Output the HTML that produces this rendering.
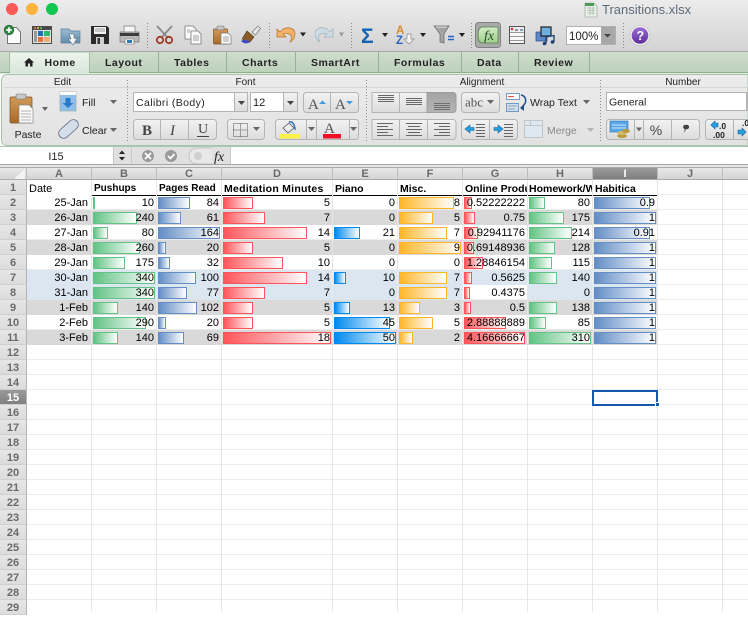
<!DOCTYPE html>
<html><head><meta charset="utf-8"><title>Transitions.xlsx</title>
<style>
html,body{margin:0;padding:0;background:#fff}
body{width:748px;height:612px;overflow:hidden;position:relative;font-family:"Liberation Sans",sans-serif}
#chrome{position:absolute;left:0;top:0}
#chrome text{font-family:"Liberation Sans",sans-serif;fill:#222}
.col{position:absolute;top:167px;height:13px;box-sizing:border-box;background:linear-gradient(#e8e8e8,#d4d4d4);border-right:1px solid #bdbdbd;border-top:1px solid #aaa;border-bottom:1px solid #aaa;font:bold 11px/12px "Liberation Sans",sans-serif;color:#6a6a6a;text-align:center}
.rh{position:absolute;left:0;width:27px;height:15px;box-sizing:border-box;background:linear-gradient(#e6e6e6,#dcdcdc);border-right:1px solid #b4b4b4;border-bottom:1px solid #cfcfcf;font:bold 11px/17px "Liberation Sans",sans-serif;color:#6a6a6a;text-align:center}
.v{position:absolute;top:180px;bottom:0;width:1px;background:#e6e6e6}
#hl{position:absolute;left:27px;right:0;top:180px;bottom:0;background:repeating-linear-gradient(to bottom,#fff 0,#fff 14px,#ececec 14px,#ececec 15px)}
table{position:absolute;left:27px;top:180px;border-collapse:separate;border-spacing:0;table-layout:fixed;width:631px;font:11px "Liberation Sans",sans-serif;color:#000}
td{height:15px;box-sizing:border-box;padding:0 2px 0 0;text-align:right;position:relative;overflow:hidden;white-space:nowrap;border-right:1px solid #e6e6e6;border-bottom:1px solid #ececec;line-height:14px}
td span{position:relative;top:1px}
td:first-child{padding-right:3px}
tr.h td{text-align:left;font-weight:bold;font-size:10.500px;padding:0 0 0 2px;border-bottom:0;background:#fff}
tr.h td:first-child{font-weight:normal;font-size:11px}
tr.t td:not(:first-child){box-shadow:inset 0 1px #000}
tr.g td,td.g{background:#d9d9d9;border-right-color:#e6e6e6;border-bottom-color:#d9d9d9}
tr.b td,td.b{background:#dce6f1;border-right-color:#e8eef5;border-bottom-color:#dce6f1}
tr td.w{background:#fff;border-right-color:#e6e6e6;border-bottom-color:#ececec}
td i{position:absolute;left:1px;top:2px;height:12px;box-sizing:border-box;border:1px solid}
.B i{border-color:#63c384;background:linear-gradient(90deg,#63c384,#fff)}
.C i,.I i{border-color:#638ec6;background:linear-gradient(90deg,#638ec6,#fff)}
.D i,.G i{border-color:#ff555a;background:linear-gradient(90deg,#ff555a,#fff)}
.E i{border-color:#008aef;background:linear-gradient(90deg,#008aef,#fff)}
.F i{border-color:#ffb628;background:linear-gradient(90deg,#ffb628,#fff)}
.H i{border-color:#63c384;background:linear-gradient(90deg,#63c384,#fff)}
#sel{position:absolute;left:592px;top:390px;width:66px;height:16px;box-sizing:border-box;border:2px solid #1558b0}
#hd{position:absolute;left:655px;top:402px;background:#1558b0;border:1px solid #fff;width:3px;height:3px}
</style></head><body>
<svg id="chrome" width="748" height="167" viewBox="0 0 748 167" xmlns="http://www.w3.org/2000/svg">
<defs>
<linearGradient id="tb" x1="0" y1="0" x2="0" y2="1"><stop offset="0" stop-color="#ececec"/><stop offset="1" stop-color="#d3d3d3"/></linearGradient>
<linearGradient id="tab" x1="0" y1="0" x2="0" y2="1"><stop offset="0" stop-color="#cfdfcd"/><stop offset="1" stop-color="#bcd0bb"/></linearGradient>
<linearGradient id="hm" x1="0" y1="0" x2="0" y2="1"><stop offset="0" stop-color="#eef5ee"/><stop offset="1" stop-color="#d8e6d9"/></linearGradient>
<linearGradient id="rb" x1="0" y1="0" x2="0" y2="1"><stop offset="0" stop-color="#ececec"/><stop offset="1" stop-color="#e2e2e2"/></linearGradient>
<linearGradient id="bt" x1="0" y1="0" x2="0" y2="1"><stop offset="0" stop-color="#f2f2f2"/><stop offset="1" stop-color="#dcdcdc"/></linearGradient>
<linearGradient id="dk" x1="0" y1="0" x2="0" y2="1"><stop offset="0" stop-color="#a4a4a4"/><stop offset="1" stop-color="#b4b4b4"/></linearGradient>
<linearGradient id="clip" x1="0" y1="0" x2="0" y2="1"><stop offset="0" stop-color="#d29a5a"/><stop offset="1" stop-color="#a86a28"/></linearGradient>
<linearGradient id="fxg" x1="0" y1="0" x2="0" y2="1"><stop offset="0" stop-color="#d3ecc6"/><stop offset="1" stop-color="#9fd08c"/></linearGradient>
<linearGradient id="pur" x1="0" y1="0" x2="0" y2="1"><stop offset="0" stop-color="#9a6fd0"/><stop offset="1" stop-color="#5e2ea0"/></linearGradient>
<linearGradient id="fold" x1="0" y1="0" x2="0" y2="1"><stop offset="0" stop-color="#9dbdd4"/><stop offset="1" stop-color="#5f8cae"/></linearGradient>
</defs>
<rect width="748" height="52" fill="url(#tb)"/>
<circle cx="12" cy="9" r="6" fill="#fc5b57"/><circle cx="32" cy="9" r="6" fill="#fdb43f"/><circle cx="52" cy="9" r="6" fill="#13c551"/>
<path d="M585 3h9l3 3v11h-12z" fill="#e8efe6" stroke="#8a9a8a" stroke-width=".6"/><path d="M585 3h9v3h-9z" fill="#4f9a5c"/><path d="M587 8h8M587 10.500h8M587 13h8M590 7v8M593 7v8" stroke="#9aa89a" stroke-width=".6" fill="none"/>
<text x="602" y="14" font-size="13" style="fill:#5d6b78">Transitions.xlsx</text>
<path d="M7.500 27.500h9l4 4.500v11.500h-13z" fill="#fbfbfb" stroke="#777"/><circle cx="9" cy="30" r="4.800" fill="#2b8a3e" stroke="#1d5c2a" stroke-width=".6"/><path d="M9 27.200v5.600M6.200 30h5.600" stroke="#fff" stroke-width="1.800"/>
<rect x="32" y="26" width="20" height="18" fill="#4a4a4a"/><rect x="33" y="30" width="18" height="13" fill="#e4e4e4"/><circle cx="35" cy="28" r="1" fill="#e85"/><circle cx="38" cy="28" r="1" fill="#ec5"/><circle cx="41" cy="28" r="1" fill="#6c6"/>
<rect x="38" y="31" width="5" height="5" fill="#1f6fb8"/><rect x="44" y="31" width="6" height="5" fill="#35b56d"/><rect x="38" y="37" width="5" height="5" fill="#e8703a"/><rect x="44" y="37" width="6" height="5" fill="#e8b27a"/><rect x="34" y="31" width="3" height="11" fill="#9a9a9a"/>
<path d="M61 29h8l2 2h9v12h-19z" fill="url(#fold)" stroke="#5c7f9c" stroke-width=".7"/><path d="M69 34h5v4c1 1 3 0 4 -1l-5 8l-5 -6h3z" fill="#f4f4f4" stroke="#5c6f80" stroke-width=".6"/>
<path d="M91 26h16l2 2v16h-18z" fill="#2a2a2a"/><path d="M94 27h12v7h-12z" fill="#f2f2f2"/><path d="M95 29h10M95 31h10" stroke="#999"/><path d="M96 37h8v7h-8z" fill="#cfcfcf"/><rect x="97.500" y="38" width="2.500" height="6" fill="#333"/>
<path d="M124 26h11v7h-11z" fill="#f6f6f6" stroke="#777" stroke-width=".7"/><path d="M120 32h19v10h-19z" fill="#b9b9b9" stroke="#777" stroke-width=".7"/><path d="M120 33h19v3h-19z" fill="#3c3c3c"/><path d="M125 39h9v5h-9z" fill="#fff" stroke="#666" stroke-width=".6"/><rect x="127" y="40" width="5" height="3" fill="#2a7fb0"/>
<g stroke="#8a8a8a" stroke-dasharray="1 2" fill="none"><path d="M147.500 23v25M269.500 23v25M351.500 23v25M471.500 23v25M623.500 23v25"/></g>
<path d="M157 26l11 12M172 26l-11 12" stroke="#8a8a8a" stroke-width="1.800" fill="none"/><circle cx="160" cy="40" r="3.200" fill="none" stroke="#a03a24" stroke-width="1.800"/><circle cx="169" cy="40" r="3.200" fill="none" stroke="#a03a24" stroke-width="1.800"/>
<path d="M185 26h8l3 3v10h-11z" fill="#fafafa" stroke="#777" stroke-width=".8"/><path d="M191 31h7l3 3v10h-10z" fill="#fafafa" stroke="#777" stroke-width=".8"/><path d="M193 36h6M193 38h6M193 40h6M187 30h3M187 32h3" stroke="#888" stroke-width=".8"/>
<rect x="213.500" y="29" width="14" height="15" rx="1" fill="url(#clip)" stroke="#7a5020" stroke-width=".7"/><rect x="217" y="26" width="7" height="4" rx="1" fill="#c4c4c4" stroke="#777" stroke-width=".6"/><path d="M221 33h7l3 3v8h-10z" fill="#fafafa" stroke="#777" stroke-width=".7"/><path d="M223 37h6M223 39h6M223 41h6" stroke="#888" stroke-width=".8"/>
<path d="M252 32l6 -6l2.500 2.500l-5 6.500z" fill="#e6e6e6" stroke="#777" stroke-width=".7"/><path d="M247 31l7 6l-4 5l-8 -3z" fill="#8a5a2a" stroke="#5c3a18" stroke-width=".6"/><path d="M241 41c3 -2 6 -2 9 1c-3 2 -6 2 -9 -1z" fill="#3a4fc0"/>
<path d="M283 29c7 -3 12 0 12 5c0 3 -2 7 -5 8c2 -3 2 -7 -1 -8c-2 -1 -4 -1 -6 0l3 3h-9v-8l3 3z" fill="#f3b169" stroke="#b07428" stroke-width=".7"/><path d="M300 32.500h6l-3 4z" fill="#222"/>
<path d="M327 29c-7 -3 -12 0 -12 5c0 3 2 7 5 8c-2 -3 -2 -7 1 -8c2 -1 4 -1 6 0l-3 3h9v-8l-3 3z" fill="#cddbe4" stroke="#9db2c0" stroke-width=".7"/><path d="M339 32.500h5l-2.500 4z" fill="#999"/>
<text x="361" y="43" font-size="21" font-weight="bold" style="fill:#1464b4">Σ</text><path d="M382 33h6l-3 4z" fill="#222"/>
<text x="396" y="34" font-size="11.500" font-weight="bold" style="fill:#d88a30">A</text><text x="396" y="44" font-size="11.500" font-weight="bold" style="fill:#2c62c0">Z</text><path d="M407 34h4v5h3l-5 5l-5 -5h3z" fill="#f3f3f3" stroke="#888" stroke-width=".7"/><path d="M420 33h6l-3 4z" fill="#222"/>
<path d="M434 26h15l-5 8v9l-4 -1v-8z" fill="#a4a4a4" stroke="#666" stroke-width=".7"/><path d="M436 27h11" stroke="#e8e8e8"/><path d="M448 36.500h6M448 39.500h6" stroke="#2a62c0" stroke-width="1.600"/><path d="M459 33h6l-3 4z" fill="#222"/>
<rect x="475.500" y="22.500" width="25" height="25" rx="3" fill="#a9a9a9" stroke="#808080"/><path d="M483 27h15v16h-15c-4 0 -5 -3 -5 -8s1 -8 5 -8z" fill="url(#fxg)" stroke="#4f8048" stroke-width=".8"/><text x="484" y="40" font-size="14" font-style="italic" style="font-family:'Liberation Serif',serif;fill:#2e4a2a">fx</text>
<rect x="509.500" y="26.500" width="15" height="17" fill="#f8f8f8" stroke="#555"/><path d="M510 32.500h14M510 36.500h14M510 40.500h14" stroke="#999"/><rect x="510" y="27" width="14" height="5" fill="#eee"/><circle cx="512" cy="29" r="1.300" fill="#d33"/><rect x="515" y="29" width="3" height="2" fill="#89a"/><rect x="520" y="29" width="3" height="2" fill="#89a"/>
<rect x="536" y="32" width="11" height="9" fill="#5b88c8" stroke="#2a4a80" stroke-width=".7"/><rect x="541" y="27" width="10" height="9" fill="#6eb0e0" stroke="#222" stroke-width="1.200"/><path d="M546 44v-7l8 -1.500v6.500" fill="none" stroke="#1f3f70" stroke-width="1.300"/><circle cx="544.500" cy="43.500" r="1.800" fill="#1f3f70"/><circle cx="552.500" cy="42" r="1.800" fill="#1f3f70"/>
<rect x="566.500" y="26.500" width="49" height="18" fill="#fff" stroke="#b0b0b0"/><rect x="601" y="27" width="14" height="17" fill="#a8a8a8"/><path d="M604 34h7l-3.500 3.500z" fill="#444"/><text x="569" y="40" font-size="11.500">100%</text>
<circle cx="640" cy="35.500" r="10" fill="#f2f2f2" stroke="#bbb" stroke-width=".6"/><circle cx="640" cy="35.500" r="8.300" fill="url(#pur)"/><text x="636.500" y="40" font-size="12.500" font-weight="bold" style="fill:#fff">?</text>
<rect y="51" width="748" height="22" fill="url(#tab)"/><path d="M0 51.500h748" stroke="#a6a6a6"/><path d="M0 72.500h748" stroke="#8fae90"/>
<g stroke="#97b098"><path d="M89.500 52v20M158.500 52v20M226.500 52v20M295.500 52v20M378.500 52v20M461.500 52v20M518.500 52v20M589.500 52v20"/></g>
<rect x="10" y="52" width="79" height="21" fill="url(#hm)"/><path d="M9.500 72v-20h80v20" fill="none" stroke="#a6bda7"/>
<path d="M24 62.500l5 -4.500l5 4.500h-1.500v4h-2.500v-3h-2v3h-2.500v-4z" fill="#222"/>
<g font-size="10.500" font-weight="bold" style="letter-spacing:.5px">
<text x="44.500" y="66">Home</text><text x="105" y="66">Layout</text><text x="174" y="66">Tables</text><text x="242" y="66">Charts</text><text x="311" y="66">SmartArt</text><text x="394" y="66">Formulas</text><text x="477" y="66">Data</text><text x="534" y="66">Review</text></g>
<path d="M0 73h748v1H0z" fill="#dfeee0"/>
<path d="M1.500 81c0 -4 2 -6.500 6 -6.500H748V145.500H7.500c-4 0 -6 -2 -6 -5z" fill="url(#rb)" stroke="#a9c4ac"/>
<path d="M4 87.500H748" stroke="#d6d6d6"/>
<g font-size="10" text-anchor="middle"><text x="62.500" y="85">Edit</text><text x="245.500" y="85">Font</text><text x="482" y="85">Alignment</text><text x="683" y="85">Number</text></g>
<g stroke="#8e8e8e" stroke-dasharray="1 2"><path d="M127.500 80v62M366.500 80v62M600.500 80v62"/></g>
<rect x="10" y="97" width="22" height="26" rx="1.500" fill="url(#clip)" stroke="#7a5020" stroke-width=".7"/><rect x="16" y="94" width="10" height="5" rx="1.500" fill="#c9c9c9" stroke="#777" stroke-width=".6"/><path d="M19 105h10l4 4v14h-14z" fill="#fafafa" stroke="#888" stroke-width=".7"/><path d="M21 111h10M21 114h10M21 117h10M21 120h10" stroke="#999" stroke-width=".8"/>
<path d="M42 107h6l-3 4z" fill="#666"/><text x="28" y="138" font-size="10.500" text-anchor="middle">Paste</text>
<rect x="60" y="92" width="16" height="19" fill="#8fc0ea" stroke="#9aa" stroke-width=".7"/><rect x="60" y="92" width="16" height="3" fill="#fff"/><path d="M65.500 98h5v5h3l-5.500 5l-5.500 -5h3z" fill="#2a78c8"/>
<text x="82" y="106" font-size="10.500">Fill</text><path d="M110 100h7l-3.500 4z" fill="#666"/>
<rect x="57" y="124" width="23" height="10" rx="5" fill="#d2deea" stroke="#666a80" stroke-width=".8" transform="rotate(-42 68.500 129)"/>
<text x="82" y="134" font-size="10.500">Clear</text><path d="M110 128h7l-3.500 4z" fill="#666"/>
<rect x="133.500" y="92.500" width="114" height="19" fill="#fff" stroke="#b4b4b4"/><rect x="234" y="93" width="13" height="18" fill="url(#bt)"/><path d="M234.500 93v18" stroke="#b4b4b4"/><path d="M238 101h7l-3.500 4z" fill="#444"/><text x="136" y="106" font-size="10.500" style="letter-spacing:.4px">Calibri (Body)</text>
<rect x="250.500" y="92.500" width="47" height="19" fill="#fff" stroke="#b4b4b4"/><rect x="283" y="93" width="14" height="18" fill="url(#bt)"/><path d="M283.500 93v18" stroke="#b4b4b4"/><path d="M287 101h7l-3.500 4z" fill="#444"/><text x="253" y="106" font-size="11">12</text>
<rect x="303.500" y="92.500" width="55" height="20" rx="3" fill="url(#bt)" stroke="#b4b4b4"/><path d="M330.500 93v19" stroke="#b4b4b4"/>
<text x="308" y="109" font-size="15" style="font-family:'Liberation Serif',serif;fill:#555">A</text><text x="335" y="109" font-size="15" style="font-family:'Liberation Serif',serif;fill:#555">A</text><path d="M319 104h7l-3.500 -3.500z" fill="#3f9ae0"/><path d="M346 101h7l-3.500 3.500z" fill="#3f9ae0"/>
<rect x="133.500" y="119.500" width="83" height="20" rx="3" fill="url(#bt)" stroke="#b4b4b4"/><path d="M160.500 120v19M188.500 120v19" stroke="#b4b4b4"/>
<text x="142" y="135" font-size="15" font-weight="bold" style="font-family:'Liberation Serif',serif;fill:#444">B</text><text x="170" y="135" font-size="15" font-style="italic" style="font-family:'Liberation Serif',serif;fill:#444">I</text><text x="198" y="133" font-size="14" style="font-family:'Liberation Serif',serif;fill:#444">U</text><path d="M197 136.500h12" stroke="#444"/>
<rect x="227.500" y="119.500" width="37" height="20" rx="3" fill="url(#bt)" stroke="#b4b4b4"/><path d="M233.500 123.500h14v13h-14zM240.500 123.500v13M233.500 130h14" fill="none" stroke="#555" stroke-dasharray="1 1"/><path d="M253 127h7l-3.500 4z" fill="#666"/>
<rect x="275.500" y="119.500" width="83" height="20" rx="3" fill="url(#bt)" stroke="#b4b4b4"/><path d="M306.500 120v19M316.500 120v19M349.500 120v19" stroke="#b4b4b4"/>
<path d="M283 128l6 -5l5 5l-6 5z" fill="#eee" stroke="#555" stroke-width=".8"/><path d="M289 122c3 -1 6 2 6 8" fill="none" stroke="#2a78c8" stroke-width="1.500"/><rect x="280" y="134" width="20" height="4.500" fill="#fbf24a"/>
<path d="M308 127h7l-3.500 4z" fill="#666"/>
<text x="324" y="133" font-size="15" style="font-family:'Liberation Serif',serif;fill:#555">A</text><rect x="323" y="134" width="18" height="4.500" fill="#f0102a"/><path d="M350 127h7l-3.500 4z" fill="#666"/>
<path d="M372 92.500h81a3 3 0 0 1 3 3v14a3 3 0 0 1 -3 3h-81z" fill="url(#bt)" stroke="#b4b4b4"/>
<path d="M427 92.500h26a3 3 0 0 1 3 3v14a3 3 0 0 1 -3 3h-26z" fill="url(#dk)" stroke="#999" stroke-width=".8"/><path d="M399.500 93v19" stroke="#b4b4b4"/>
<g stroke="#666" stroke-width="1" fill="none"><path d="M378 95.500h16M378 97.500h16M378 99.500h16M378 101.500h16"/><path d="M406 98.500h16M406 100.500h16M406 102.500h16M406 104.500h16"/></g><g stroke="#6f6f6f"><path d="M434 103.500h16M434 105.500h16M434 107.500h16M434 109.500h16"/></g>
<rect x="461.500" y="92.500" width="38" height="20" rx="3" fill="url(#bt)" stroke="#b4b4b4"/><text x="465" y="106.500" font-size="13" style="font-family:'Liberation Serif',serif;fill:#555">abc</text><path d="M487 100h7l-3.500 4z" fill="#666"/>
<rect x="506.500" y="93.500" width="13" height="6" fill="#fafafa" stroke="#5b88b8" stroke-width=".8"/><path d="M508 96.500h6" stroke="#e05050"/><rect x="506.500" y="103.500" width="12" height="8" fill="#cfe0f2" stroke="#5b88b8" stroke-width=".8"/><path d="M508 106h9M508 109h7" stroke="#7a8a9a" stroke-width=".8"/><path d="M521 95c5 1 7 7 1 12" fill="none" stroke="#1f4f90" stroke-width="1.500"/><path d="M524 104l-4 4l4 3z" fill="#1f4f90"/>
<text x="530" y="106" font-size="10.500">Wrap Text</text><path d="M583 100h7l-3.500 4z" fill="#666"/>
<path d="M372 119.500h81a3 3 0 0 1 3 3v14a3 3 0 0 1 -3 3h-81z" fill="url(#bt)" stroke="#b4b4b4"/><path d="M399.500 120v19M427.500 120v19" stroke="#b4b4b4"/>
<g stroke="#666" fill="none"><path d="M377 123.500h16M377 126.500h11M377 129.500h16M377 132.500h11M377 135.500h16"/><path d="M406 123.500h16M408 126.500h12M406 129.500h16M408 132.500h12M406 135.500h16"/><path d="M434 123.500h16M439 126.500h11M434 129.500h16M439 132.500h11M434 135.500h16"/></g>
<rect x="461.500" y="119.500" width="56" height="20" rx="3" fill="url(#bt)" stroke="#b4b4b4"/><path d="M489.500 120v19" stroke="#b4b4b4"/>
<path d="M465 129l5 -4v2.500h4v3h-4v2.500z" fill="#28a0e0" stroke="#1560a0" stroke-width=".6"/><path d="M476 124.500h9M476 127.500h9M476 130.500h9M476 133.500h9M476 136.500h9" stroke="#666"/>
<path d="M503 129l-5 -4v2.500h-4v3h4v2.500z" fill="#28a0e0" stroke="#1560a0" stroke-width=".6"/><path d="M504 124.500h9M504 127.500h9M504 130.500h9M504 133.500h9M504 136.500h9" stroke="#666"/>
<rect x="524.500" y="120.500" width="18" height="17" fill="#dde9f2" stroke="#c4c4c4"/><path d="M525 125.500h17M530.500 121v4" stroke="#c4c4c4"/><text x="547" y="134" font-size="10.500" style="fill:#8a8a8a">Merge</text><path d="M587 128h7l-3.500 4z" fill="#b4b4b4"/>
<rect x="606.500" y="92.500" width="140" height="18" fill="#fff" stroke="#b4b4b4"/><rect x="747.500" y="92.500" width="4" height="18" fill="#eee" stroke="#b4b4b4"/><text x="609" y="105.500" font-size="10.500">General</text>
<rect x="606.500" y="119.500" width="93" height="20" rx="3" fill="url(#bt)" stroke="#b4b4b4"/><path d="M634.500 120v19M643.500 120v19M671.500 120v19" stroke="#b4b4b4"/>
<rect x="610" y="121" width="18" height="11" fill="#5aa8e8" stroke="#2a70b0" stroke-width=".6"/><path d="M612 125h14M612 128h14" stroke="#cfe4f7"/><ellipse cx="622" cy="136" rx="5" ry="2" fill="#b89a40"/><ellipse cx="622" cy="133" rx="5" ry="2" fill="#d4bb6a"/><ellipse cx="626" cy="131" rx="4" ry="2" fill="#b89a40"/>
<path d="M636 127.500h6l-3 4z" fill="#666"/>
<text x="656" y="135" font-size="14" text-anchor="middle" style="fill:#444">%</text>
<path d="M686 125a2.200 2.200 0 1 1 0 4c-.5 2 -1.500 3 -2.500 4c1 -1.500 1.500 -3 1 -4a2 2 0 0 1 1.500 -4z" fill="#444"/>
<rect x="705.500" y="119.500" width="50" height="20" rx="3" fill="url(#bt)" stroke="#b4b4b4"/><path d="M733.500 120v19" stroke="#b4b4b4"/>
<path d="M711 125l4 -4v2h3v4h-3v2z" fill="#28a0e0" stroke="#1560a0" stroke-width=".6"/><text x="719" y="129" font-size="8.500" font-weight="bold">.0</text><text x="713" y="138" font-size="8.500" font-weight="bold">.00</text>
<path d="M746 132l-4 -4v2h-4v4h4v2z" fill="#28a0e0" stroke="#1560a0" stroke-width=".6"/><text x="742" y="126" font-size="8.500" font-weight="bold">.0</text>
<rect y="147" width="748" height="17" fill="#fff"/><path d="M0 146.500H748" stroke="#a9c8ae"/>
<text x="56" y="160" font-size="11" text-anchor="middle" style="fill:#222">I15</text>
<rect x="113" y="147" width="118" height="17" fill="#e0e0e0"/><path d="M113.500 147v17M131.500 147v17M230.500 147v17" stroke="#c8c8c8"/>
<path d="M119 154l3 -3.500l3 3.500zM119 157l3 3.500l3 -3.500z" fill="#222"/>
<circle cx="148" cy="156" r="6" fill="#9a9a9a"/><path d="M145 153l6 6M151 153l-6 6" stroke="#fff" stroke-width="1.800"/>
<circle cx="171" cy="156" r="6" fill="#9a9a9a"/><path d="M168 156l2.500 2.500l4 -4.500" stroke="#fff" stroke-width="1.800" fill="none"/>
<path d="M212 148h-13c-7 0 -10 3 -10 8s3 8 10 8h13" fill="#e8e8e8" stroke="#c4c4c4"/><circle cx="198" cy="156" r="4" fill="#d0d0d0"/>
<text x="214" y="161" font-size="14" font-style="italic" style="font-family:'Liberation Serif',serif;fill:#222">fx</text>
<rect y="164" width="748" height="3" fill="#e8e8e8"/><path d="M0 164.500H748" stroke="#a6a6a6"/>
</svg>

<div class="col" style="left:0;width:27px"><svg width="26" height="11" style="display:block"><path d="M25 1v10H14z" fill="#f4f4f4"/></svg></div>
<div class="col" style="left:27px;width:65px">A</div>
<div class="col" style="left:92px;width:65px">B</div>
<div class="col" style="left:157px;width:65px">C</div>
<div class="col" style="left:222px;width:111px">D</div>
<div class="col" style="left:333px;width:65px">E</div>
<div class="col" style="left:398px;width:65px">F</div>
<div class="col" style="left:463px;width:65px">G</div>
<div class="col" style="left:528px;width:65px">H</div>
<div class="col" style="left:593px;width:65px;background:linear-gradient(#9a9a9a,#7f7f7f);color:#fff">I</div>
<div class="col" style="left:658px;width:65px">J</div>
<div class="col" style="left:723px;width:25px;border-right:0"></div>

<div id="hl"></div>
<div class="v" style="left:91px"></div><div class="v" style="left:156px"></div><div class="v" style="left:221px"></div><div class="v" style="left:332px"></div><div class="v" style="left:397px"></div><div class="v" style="left:462px"></div><div class="v" style="left:527px"></div><div class="v" style="left:592px"></div><div class="v" style="left:657px"></div><div class="v" style="left:722px"></div>

<div class="rh" style="top:180px">1</div><div class="rh" style="top:195px">2</div><div class="rh" style="top:210px">3</div><div class="rh" style="top:225px">4</div><div class="rh" style="top:240px">5</div><div class="rh" style="top:255px">6</div><div class="rh" style="top:270px">7</div><div class="rh" style="top:285px">8</div><div class="rh" style="top:300px">9</div><div class="rh" style="top:315px">10</div><div class="rh" style="top:330px">11</div><div class="rh" style="top:345px">12</div><div class="rh" style="top:360px">13</div><div class="rh" style="top:375px">14</div><div class="rh" style="top:390px;background:linear-gradient(#9a9a9a,#808080);color:#fff">15</div><div class="rh" style="top:405px">16</div><div class="rh" style="top:420px">17</div><div class="rh" style="top:435px">18</div><div class="rh" style="top:450px">19</div><div class="rh" style="top:465px">20</div><div class="rh" style="top:480px">21</div><div class="rh" style="top:495px">22</div><div class="rh" style="top:510px">23</div><div class="rh" style="top:525px">24</div><div class="rh" style="top:540px">25</div><div class="rh" style="top:555px">26</div><div class="rh" style="top:570px">27</div><div class="rh" style="top:585px">28</div><div class="rh" style="top:600px">29</div>

<table>
<colgroup><col style="width:65px"><col style="width:65px"><col style="width:65px"><col style="width:111px"><col style="width:65px"><col style="width:65px"><col style="width:65px"><col style="width:65px"><col style="width:65px"></colgroup>
<tr class="h"><td><span>Date</span></td><td><span style="font-size:10px">Pushups</span></td><td><span style="font-size:10px">Pages Read</span></td><td><span style="letter-spacing:.25px">Meditation Minutes</span></td><td><span>Piano</span></td><td><span>Misc.</span></td><td><span>Online Productivity</span></td><td style="padding-left:1px"><span>Homework/Work</span></td><td><span>Habitica</span></td></tr>
<tr class="t"><td><span>25-Jan</span></td><td class="B"><i style="width:2px"></i><span>10</span></td><td class="C"><i style="width:32px"></i><span>84</span></td><td class="D"><i style="width:30px"></i><span>5</span></td><td class="E"><span>0</span></td><td class="F"><i style="width:55px"></i><span>8</span></td><td class="G"><i style="width:8px"></i><span>0.52222222</span></td><td class="H"><i style="width:16px"></i><span>80</span></td><td class="I"><i style="width:56px"></i><span>0.9</span></td></tr>
<tr class="g"><td><span>26-Jan</span></td><td class="B"><i style="width:44px"></i><span>240</span></td><td class="C"><i style="width:23px"></i><span>61</span></td><td class="D"><i style="width:42px"></i><span>7</span></td><td class="E"><span>0</span></td><td class="F"><i style="width:34px"></i><span>5</span></td><td class="G"><i style="width:11px"></i><span>0.75</span></td><td class="H"><i style="width:35px"></i><span>175</span></td><td class="I"><i style="width:62px"></i><span>1</span></td></tr>
<tr><td><span>27-Jan</span></td><td class="B"><i style="width:15px"></i><span>80</span></td><td class="C"><i style="width:62px"></i><span>164</span></td><td class="D"><i style="width:84px"></i><span>14</span></td><td class="E"><i style="width:26px"></i><span>21</span></td><td class="F"><i style="width:48px"></i><span>7</span></td><td class="G"><i style="width:14px"></i><span>0.92941176</span></td><td class="H"><i style="width:43px"></i><span>214</span></td><td class="I"><i style="width:56px"></i><span>0.91</span></td></tr>
<tr class="g"><td><span>28-Jan</span></td><td class="B"><i style="width:47px"></i><span>260</span></td><td class="C"><i style="width:8px"></i><span>20</span></td><td class="D"><i style="width:30px"></i><span>5</span></td><td class="E"><span>0</span></td><td class="F"><i style="width:62px"></i><span>9</span></td><td class="G"><i style="width:10px"></i><span>0.69148936</span></td><td class="H"><i style="width:26px"></i><span>128</span></td><td class="I"><i style="width:62px"></i><span>1</span></td></tr>
<tr><td><span>29-Jan</span></td><td class="B"><i style="width:32px"></i><span>175</span></td><td class="C"><i style="width:12px"></i><span>32</span></td><td class="D"><i style="width:60px"></i><span>10</span></td><td class="E"><span>0</span></td><td class="F"><span>0</span></td><td class="G"><i style="width:19px"></i><span>1.28846154</span></td><td class="H"><i style="width:23px"></i><span>115</span></td><td class="I"><i style="width:62px"></i><span>1</span></td></tr>
<tr class="b"><td><span>30-Jan</span></td><td class="B"><i style="width:62px"></i><span>340</span></td><td class="C"><i style="width:38px"></i><span>100</span></td><td class="D"><i style="width:84px"></i><span>14</span></td><td class="E"><i style="width:12px"></i><span>10</span></td><td class="F"><i style="width:48px"></i><span>7</span></td><td class="G g"><i style="width:8px"></i><span>0.5625</span></td><td class="H"><i style="width:28px"></i><span>140</span></td><td class="I"><i style="width:62px"></i><span>1</span></td></tr>
<tr class="b"><td><span>31-Jan</span></td><td class="B"><i style="width:62px"></i><span>340</span></td><td class="C"><i style="width:29px"></i><span>77</span></td><td class="D"><i style="width:42px"></i><span>7</span></td><td class="E"><span>0</span></td><td class="F"><i style="width:48px"></i><span>7</span></td><td class="G w"><i style="width:6px"></i><span>0.4375</span></td><td class="H"><span>0</span></td><td class="I"><i style="width:62px"></i><span>1</span></td></tr>
<tr class="g"><td><span>1-Feb</span></td><td class="B"><i style="width:25px"></i><span>140</span></td><td class="C"><i style="width:39px"></i><span>102</span></td><td class="D"><i style="width:30px"></i><span>5</span></td><td class="E"><i style="width:16px"></i><span>13</span></td><td class="F"><i style="width:21px"></i><span>3</span></td><td class="G"><i style="width:7px"></i><span>0.5</span></td><td class="H"><i style="width:28px"></i><span>138</span></td><td class="I"><i style="width:62px"></i><span>1</span></td></tr>
<tr><td><span>2-Feb</span></td><td class="B"><i style="width:53px"></i><span>290</span></td><td class="C"><i style="width:8px"></i><span>20</span></td><td class="D"><i style="width:30px"></i><span>5</span></td><td class="E"><i style="width:56px"></i><span>45</span></td><td class="F"><i style="width:34px"></i><span>5</span></td><td class="G"><i style="width:42px"></i><span>2.88888889</span></td><td class="H"><i style="width:17px"></i><span>85</span></td><td class="I"><i style="width:62px"></i><span>1</span></td></tr>
<tr class="g"><td><span>3-Feb</span></td><td class="B"><i style="width:25px"></i><span>140</span></td><td class="C"><i style="width:26px"></i><span>69</span></td><td class="D"><i style="width:108px"></i><span>18</span></td><td class="E"><i style="width:62px"></i><span>50</span></td><td class="F"><i style="width:14px"></i><span>2</span></td><td class="G"><i style="width:61px"></i><span>4.16666667</span></td><td class="H"><i style="width:62px"></i><span>310</span></td><td class="I"><i style="width:62px"></i><span>1</span></td></tr>
</table>
<div id="sel"></div><div id="hd"></div>
</body></html>
